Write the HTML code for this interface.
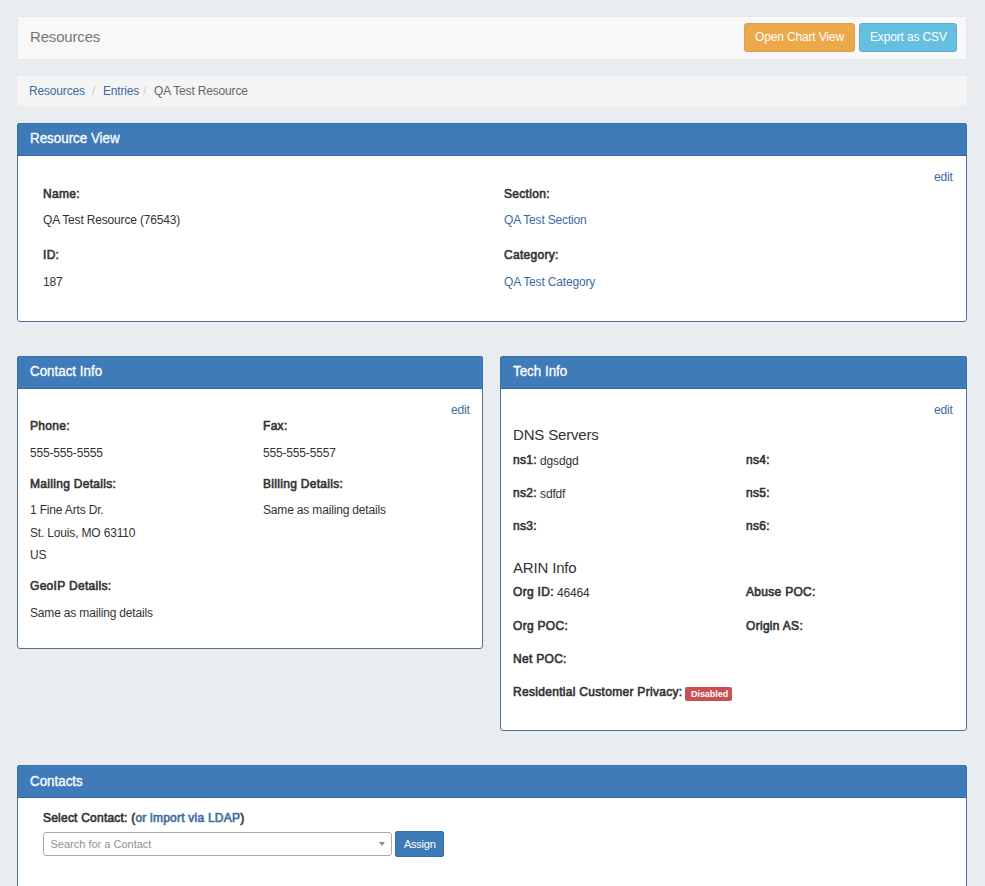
<!DOCTYPE html>
<html><head><meta charset="utf-8">
<style>
*{box-sizing:border-box;margin:0;padding:0}
html,body{width:985px;height:886px;overflow:hidden}
body{background:#eaedf0;font-family:"Liberation Sans",sans-serif;font-size:12px;color:#333;position:relative}
.a{position:absolute;white-space:nowrap;line-height:12px;letter-spacing:-0.17px}
.b{font-weight:normal;letter-spacing:0.3px;-webkit-text-stroke:0.6px}
.v{position:relative;top:1px}
.lk{color:#3d6b9f}
.box{position:absolute}
.hdr{left:17px;top:16px;width:950px;height:44px;background:#f8f8f8;border:1px solid #e6e7e8;border-radius:2px}
.bc{left:17px;top:76px;width:950px;height:30px;background:#f5f5f5;border-radius:2px}
.panel{position:absolute;background:#fff;border:1px solid #52708f;border-radius:3px}
.ph{position:absolute;left:-1px;top:-1px;right:-1px;height:33px;background:#3f7bb9;border:1px solid #3a72ac;border-bottom-color:#36689c;border-radius:3px 3px 0 0}
.pt{color:#fff;font-weight:normal;font-size:14px;line-height:14px;letter-spacing:0;transform:scaleX(0.955);transform-origin:0 0;-webkit-text-stroke:0.3px #fff}
.btn{position:absolute;border-radius:3px;color:#fff;text-align:center}
</style></head><body>

<div class="box hdr"></div>
<div class="a" style="left:30px;top:29px;font-size:15px;line-height:15px;color:#777">Resources</div>
<div class="btn" style="left:744px;top:23px;width:111px;height:29px;background:#eca84a;border:1px solid #dba04e"></div>
<div class="a" style="left:755px;top:31px;color:#fff;letter-spacing:-0.15px">Open Chart View</div>
<div class="btn" style="left:859px;top:23px;width:98px;height:29px;background:#66bfe0;border:1px solid #5cb0cf"></div>
<div class="a" style="left:870px;top:31px;color:#fff;letter-spacing:-0.15px">Export as CSV</div>

<div class="box bc"></div>
<div class="a lk" style="left:29px;top:85px">Resources</div>
<div class="a" style="left:92px;top:85px;color:#ccc">/</div>
<div class="a lk" style="left:103px;top:85px">Entries</div>
<div class="a" style="left:143px;top:85px;color:#ccc">/</div>
<div class="a" style="left:154px;top:85px;color:#666">QA Test Resource</div>

<!-- Resource View -->
<div class="panel" style="left:17px;top:123px;width:950px;height:199px">
  <div class="ph"></div>
</div>
<div class="a pt" style="left:30px;top:131px">Resource View</div>
<div class="a lk" style="left:934px;top:171px">edit</div>
<div class="a b" style="left:43px;top:188px">Name:</div>
<div class="a" style="left:43px;top:214px">QA Test Resource (76543)</div>
<div class="a b" style="left:43px;top:249px">ID:</div>
<div class="a" style="left:43px;top:276px">187</div>
<div class="a b" style="left:504px;top:188px">Section:</div>
<div class="a lk" style="left:504px;top:214px">QA Test Section</div>
<div class="a b" style="left:504px;top:249px">Category:</div>
<div class="a lk" style="left:504px;top:276px">QA Test Category</div>

<!-- Contact Info -->
<div class="panel" style="left:17px;top:356px;width:466px;height:293px">
  <div class="ph"></div>
</div>
<div class="a pt" style="left:30px;top:364px">Contact Info</div>
<div class="a lk" style="left:451px;top:404px">edit</div>
<div class="a b" style="left:30px;top:420px">Phone:</div>
<div class="a" style="left:30px;top:447px">555-555-5555</div>
<div class="a b" style="left:263px;top:420px">Fax:</div>
<div class="a" style="left:263px;top:447px">555-555-5557</div>
<div class="a b" style="left:30px;top:478px">Mailing Details:</div>
<div class="a" style="left:30px;top:504px">1 Fine Arts Dr.</div>
<div class="a" style="left:30px;top:527px">St. Louis, MO 63110</div>
<div class="a" style="left:30px;top:549px">US</div>
<div class="a b" style="left:263px;top:478px">Billing Details:</div>
<div class="a" style="left:263px;top:504px">Same as mailing details</div>
<div class="a b" style="left:30px;top:580px">GeoIP Details:</div>
<div class="a" style="left:30px;top:607px">Same as mailing details</div>

<!-- Tech Info -->
<div class="panel" style="left:500px;top:356px;width:467px;height:375px">
  <div class="ph"></div>
</div>
<div class="a pt" style="left:513px;top:364px">Tech Info</div>
<div class="a lk" style="left:934px;top:404px">edit</div>
<div class="a" style="left:513px;top:427px;font-size:15px;line-height:15px">DNS Servers</div>
<div class="a" style="left:513px;top:454px"><span class="b">ns1:</span> <span class="v">dgsdgd</span></div>
<div class="a b" style="left:746px;top:454px">ns4:</div>
<div class="a" style="left:513px;top:487px"><span class="b">ns2:</span> <span class="v">sdfdf</span></div>
<div class="a b" style="left:746px;top:487px">ns5:</div>
<div class="a b" style="left:513px;top:520px">ns3:</div>
<div class="a b" style="left:746px;top:520px">ns6:</div>
<div class="a" style="left:513px;top:559.5px;font-size:15px;line-height:15px">ARIN Info</div>
<div class="a" style="left:513px;top:586px"><span class="b">Org ID:</span> <span class="v">46464</span></div>
<div class="a b" style="left:746px;top:586px">Abuse POC:</div>
<div class="a b" style="left:513px;top:620px">Org POC:</div>
<div class="a b" style="left:746px;top:620px">Origin AS:</div>
<div class="a b" style="left:513px;top:653px">Net POC:</div>
<div class="a b" style="left:513px;top:686px">Residential Customer Privacy:</div>
<div class="box" style="left:685px;top:687px;width:47px;height:14px;background:#c9504e;border-radius:2px"></div>
<div class="a" style="left:691px;top:689px;font-size:9px;line-height:10px;letter-spacing:-0.05px;font-weight:bold;color:#fff">Disabled</div>

<!-- Contacts -->
<div class="panel" style="left:17px;top:765px;width:950px;height:140px">
  <div class="ph"></div>
</div>
<div class="a pt" style="left:30px;top:774px">Contacts</div>
<div class="a b" style="left:43px;top:812px;letter-spacing:0.22px">Select Contact: (<span class="lk">or import via LDAP</span>)</div>
<div class="box" style="left:43px;top:832px;width:349px;height:24px;background:#fff;border:1px solid #aaa;border-radius:3px"></div>
<div class="a" style="left:50.5px;top:839px;color:#939393;font-size:11px;line-height:11px;letter-spacing:0">Search for a Contact</div>
<div class="box" style="left:379px;top:842px;width:0;height:0;border-left:3.5px solid transparent;border-right:3.5px solid transparent;border-top:4.5px solid #888"></div>
<div class="btn" style="left:395px;top:831px;width:49px;height:26px;background:#3d7ab8;border:1px solid #3570aa;border-radius:2px"></div>
<div class="a" style="left:404px;top:839px;color:#fff;font-size:11px;line-height:11px;letter-spacing:-0.25px">Assign</div>

</body></html>
